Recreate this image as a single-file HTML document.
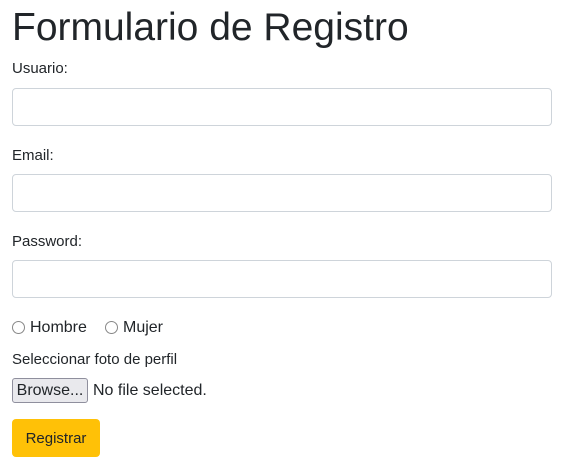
<!DOCTYPE html>
<html><head><style>
body{margin:0;font-family:"Liberation Sans",sans-serif;color:#212529;font-size:15px;}
.a{position:absolute;white-space:nowrap}
h1{position:absolute;left:12px;top:5px;margin:0;font-weight:400;font-size:39px;line-height:46px}
.in{position:absolute;left:12px;width:538px;height:36px;border:1px solid #ced4da;border-radius:4px;background:#fff}
.r{display:inline-block;width:11px;height:11px;border:1.5px solid #888;border-radius:50%;vertical-align:-2px;margin-right:5px}
.br{position:absolute;left:12px;top:378px;width:74px;height:23px;border:1px solid #8f8f9d;border-radius:3px;background:#e9e9ed;font-size:16px;line-height:23px;text-align:center}
.bt{position:absolute;left:12px;top:419px;width:88px;height:38px;background:#ffc107;border-radius:4px;font-size:15px;line-height:40px;text-align:center}
</style></head><body>
<h1>Formulario de Registro</h1>
<div class="a" style="left:12px;top:60px">Usuario:</div>
<div class="in" style="top:88px"></div>
<div class="a" style="left:12px;top:147px">Email:</div>
<div class="in" style="top:174px"></div>
<div class="a" style="left:12px;top:233px">Password:</div>
<div class="in" style="top:260px"></div>
<div class="a" style="left:12px;top:319px;font-size:16px"><span class="r"></span>Hombre</div>
<div class="a" style="left:105px;top:319px;font-size:16px"><span class="r"></span>Mujer</div>
<div class="a" style="left:12px;top:351px">Seleccionar foto de perfil</div>
<div class="br">Browse...</div>
<div class="a" style="left:93px;top:382px;font-size:16px">No file selected.</div>
<div class="bt">Registrar</div>
</body></html>
